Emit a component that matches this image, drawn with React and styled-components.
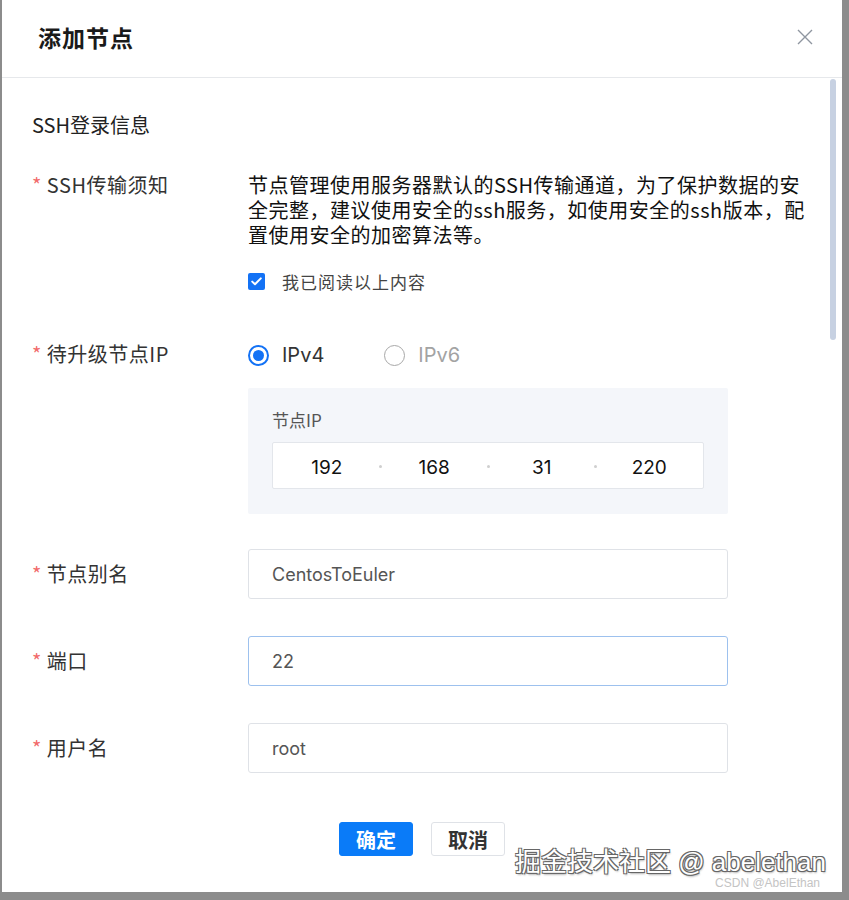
import React from "react";
import styled, { createGlobalStyle } from "styled-components";

const GlobalStyle = createGlobalStyle`
  html, body {
    margin: 0;
    padding: 0;
    background: #8c8c8c;
  }
  * {
    box-sizing: border-box;
  }
`;

const cjk = `"Noto Sans CJK SC", "Noto Sans", sans-serif`;
const latin = `Inter, "Noto Sans CJK SC", sans-serif`;

const Page = styled.div`
  height: 900px;
  padding: 0 7px 8px 2px;
  background: #8c8c8c;
`;

const Dialog = styled.div`
  position: relative;
  width: 840px;
  height: 892px;
  background: #fff;
  overflow: hidden;
  font-family: ${cjk};
`;

const Header = styled.div`
  height: 78px;
  display: flex;
  align-items: center;
  justify-content: space-between;
  padding: 0 29px 3px 36px;
  border-bottom: 1px solid #e6e8eb;
`;

const Title = styled.h2`
  margin: 0;
  font-size: 23px;
  font-weight: 700;
  letter-spacing: 1px;
  color: #1a1a1a;
  line-height: 30px;
`;

const CloseButton = styled.button`
  border: none;
  background: none;
  padding: 0;
  width: 16px;
  height: 16px;
  display: flex;
  cursor: pointer;
`;

const ScrollThumb = styled.div`
  position: absolute;
  top: 79px;
  right: 6px;
  width: 6px;
  height: 261px;
  border-radius: 3px;
  background: #c7d1e2;
`;

const Body = styled.div`
  display: flex;
  flex-direction: column;
  padding: 0 30px;
`;

const SectionTitle = styled.div`
  margin-top: 34px;
  font-size: 20px;
  line-height: 26px;
  color: #222;
`;

const FormItem = styled.div`
  display: flex;
  align-items: ${(p) => (p.$center ? "center" : "flex-start")};
  margin-top: ${(p) => p.$gap}px;
`;

const Label = styled.label`
  width: 216px;
  flex-shrink: 0;
  font-size: 20px;
  line-height: 26px;
  letter-spacing: 0.5px;
  color: #333;
`;

const Star = styled.span`
  color: #f26b6b;
  margin-right: 5px;
`;

const Content = styled.div`
  flex: 1;
  display: flex;
  flex-direction: column;
`;

const Notice = styled.p`
  margin: 0;
  font-size: 20px;
  line-height: 25px;
  letter-spacing: 0.5px;
  color: #111;
  white-space: nowrap;
`;

const CheckRow = styled.label`
  display: flex;
  align-items: center;
  height: 24px;
  margin-top: 22px;
  gap: 17px;
  font-size: 17px;
  letter-spacing: 1px;
  color: #444;
`;

const CheckBox = styled.span`
  width: 17px;
  height: 17px;
  border-radius: 2px;
  background: #1372f5;
  display: flex;
  align-items: center;
  justify-content: center;
`;

const RadioGroup = styled.div`
  display: flex;
  align-items: center;
  height: 28px;
  gap: 60px;
`;

const RadioOption = styled.label`
  display: flex;
  align-items: center;
  gap: 13px;
  font-family: ${latin};
  font-size: 20px;
  color: ${(p) => (p.$checked ? "#333" : "#a3a3a3")};
`;

const RadioCircle = styled.span`
  width: 21px;
  height: 21px;
  border-radius: 50%;
  border: ${(p) => (p.$checked ? "2px solid #1372f5" : "1px solid #a8a8a8")};
  display: flex;
  align-items: center;
  justify-content: center;

  &::after {
    content: "";
    width: 11px;
    height: 11px;
    border-radius: 50%;
    background: ${(p) => (p.$checked ? "#1372f5" : "transparent")};
  }
`;

const IpPanel = styled.div`
  width: 480px;
  margin-top: 19px;
  padding: 20px 24px 25px;
  background: #f4f6fa;
  border-radius: 2px;
`;

const IpLabel = styled.div`
  font-size: 17px;
  line-height: 24px;
  color: #555;
  margin-bottom: 10px;
`;

const IpBox = styled.div`
  display: flex;
  height: 47px;
  background: #fff;
  border: 1px solid #e3e6eb;
  border-radius: 2px;
`;

const IpSegment = styled.div`
  position: relative;
  flex: 1;
  display: flex;
  align-items: center;
  justify-content: center;
  padding-top: 3px;
  font-family: ${latin};
  font-size: 19px;
  color: #111;

  &:not(:last-child)::after {
    content: "";
    position: absolute;
    right: -1.5px;
    top: 22px;
    width: 3px;
    height: 3px;
    border-radius: 50%;
    background: #cfcfcf;
  }
`;

const TextInput = styled.input`
  width: 480px;
  height: 50px;
  padding: 0 23px;
  border: 1px solid ${(p) => (p.$focused ? "#9dc1ee" : "#dfe2e7")};
  border-radius: 3px;
  font-family: ${latin};
  font-size: 18px;
  color: #555;
  background: #fff;
  outline: none;
`;

const Footer = styled.div`
  display: flex;
  justify-content: center;
  gap: 18px;
  margin-top: 49px;
`;

const Button = styled.button`
  width: 74px;
  height: 34px;
  border-radius: 3px;
  font-family: ${cjk};
  font-size: 20px;
  font-weight: 700;
  padding: 0;
  cursor: pointer;
  border: 1px solid ${(p) => (p.$primary ? "#0a7bf8" : "#dfe2e7")};
  background: ${(p) => (p.$primary ? "#0a7bf8" : "#fff")};
  color: ${(p) => (p.$primary ? "#fff" : "#333")};
`;

const Watermark = styled.div`
  position: absolute;
  right: 16px;
  bottom: 15px;
  font-family: "Liberation Sans", "Noto Sans CJK SC", sans-serif;
  font-size: 26px;
  line-height: 30px;
  color: #fff;
  text-shadow: -1px -1px 0 #666, 1px -1px 0 #666, -1px 1px 0 #666,
    1px 1px 0 #666, 1px 2px 2px rgba(0, 0, 0, 0.3);
`;

const SubMark = styled.div`
  position: absolute;
  right: 22px;
  bottom: 2px;
  font-family: "Liberation Sans", sans-serif;
  font-size: 12px;
  line-height: 14px;
  color: #c4c4c4;
`;

function CloseIcon() {
  return (
    <svg width="16" height="16" viewBox="0 0 16 16" fill="none">
      <path d="M1 1L15 15M15 1L1 15" stroke="#8f96a0" strokeWidth="1.4" />
    </svg>
  );
}

function CheckMark() {
  return (
    <svg width="11" height="9" viewBox="0 0 11 9" fill="none">
      <path
        d="M1.2 4.6L4 7.3L9.8 1.4"
        stroke="#fff"
        strokeWidth="2"
        strokeLinecap="round"
        strokeLinejoin="round"
      />
    </svg>
  );
}

const ip = ["192", "168", "31", "220"];

export default function App() {
  return (
    <>
      <GlobalStyle />
      <Page>
        <Dialog>
          <Header>
            <Title>添加节点</Title>
            <CloseButton aria-label="关闭">
              <CloseIcon />
            </CloseButton>
          </Header>
          <ScrollThumb />
          <Body>
            <SectionTitle>SSH登录信息</SectionTitle>

            <FormItem $gap={34}>
              <Label>
                <Star>*</Star>SSH传输须知
              </Label>
              <Content>
                <Notice>
                  节点管理使用服务器默认的SSH传输通道，为了保护数据的安
                  <br />
                  全完整，建议使用安全的ssh服务，如使用安全的ssh版本，配
                  <br />
                  置使用安全的加密算法等。
                </Notice>
                <CheckRow>
                  <CheckBox>
                    <CheckMark />
                  </CheckBox>
                  我已阅读以上内容
                </CheckRow>
              </Content>
            </FormItem>

            <FormItem $gap={48}>
              <Label>
                <Star>*</Star>待升级节点IP
              </Label>
              <Content>
                <RadioGroup>
                  <RadioOption $checked>
                    <RadioCircle $checked />
                    IPv4
                  </RadioOption>
                  <RadioOption>
                    <RadioCircle />
                    IPv6
                  </RadioOption>
                </RadioGroup>
                <IpPanel>
                  <IpLabel>节点IP</IpLabel>
                  <IpBox>
                    {ip.map((part, i) => (
                      <IpSegment key={i}>{part}</IpSegment>
                    ))}
                  </IpBox>
                </IpPanel>
              </Content>
            </FormItem>

            <FormItem $gap={35} $center>
              <Label>
                <Star>*</Star>节点别名
              </Label>
              <TextInput readOnly defaultValue="CentosToEuler" />
            </FormItem>

            <FormItem $gap={37} $center>
              <Label>
                <Star>*</Star>端口
              </Label>
              <TextInput readOnly $focused defaultValue="22" />
            </FormItem>

            <FormItem $gap={37} $center>
              <Label>
                <Star>*</Star>用户名
              </Label>
              <TextInput readOnly defaultValue="root" />
            </FormItem>

            <Footer>
              <Button $primary>确定</Button>
              <Button>取消</Button>
            </Footer>
          </Body>
          <Watermark>掘金技术社区 @ abelethan</Watermark>
          <SubMark>CSDN @AbelEthan</SubMark>
        </Dialog>
      </Page>
    </>
  );
}
